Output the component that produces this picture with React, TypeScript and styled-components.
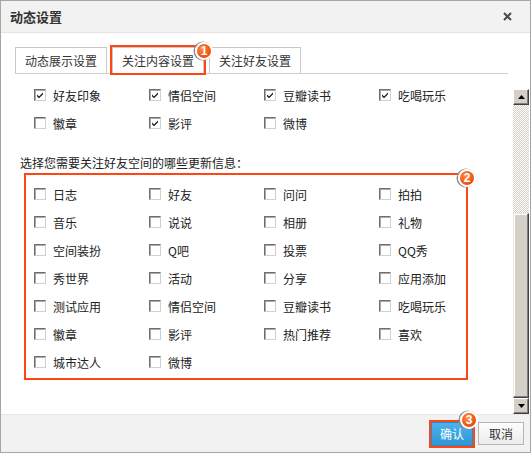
import styled, { createGlobalStyle } from "styled-components";

const GlobalStyle = createGlobalStyle`
  * { box-sizing: border-box; }
  body {
    margin: 0;
    background: #fff;
    font-family: "Noto Sans CJK SC", "Liberation Sans", sans-serif;
    font-size: 12px;
    color: #222;
  }
`;

const HILITE = "#ff4612";

const Dialog = styled.div`
  width: 531px;
  height: 453px;
  border: 1px solid #a6a6a6;
  display: flex;
  flex-direction: column;
  background: #fff;
`;

const TitleBar = styled.div`
  height: 32px;
  flex: none;
  background: #f2f2f2;
  border-bottom: 1px solid #e2e2e2;
  display: flex;
  align-items: center;
  justify-content: space-between;
  padding: 0 18px 0 9px;
`;

const Title = styled.span`
  font-size: 13px;
  font-weight: bold;
  color: #333;
`;

const CloseBtn = styled.span`
  display: flex;
  width: 9px;
  height: 9px;
  cursor: pointer;
`;

const TabBar = styled.div`
  display: flex;
  gap: 5px;
  margin: 14px 22px 0 14px;
  border-bottom: 1px solid #cfcfcf;
`;

const Tab = styled.div<{ $marked?: boolean }>`
  position: relative;
  width: 92px;
  height: 26px;
  border: 1px solid #c8c8c8;
  border-bottom: none;
  display: flex;
  align-items: center;
  justify-content: center;
  color: #333;
  background: #fff;
  ${(p) => p.$marked && `outline: 2px solid ${HILITE}; outline-offset: 0;`}
`;

const Badge = styled.span<{ $top: number; $right: number }>`
  position: absolute;
  top: ${(p) => p.$top}px;
  right: ${(p) => p.$right}px;
  width: 18px;
  height: 18px;
  border-radius: 50%;
  background: radial-gradient(circle at 40% 35%, #ff8a3d, #ee4d10 70%);
  border: 2px solid #fff;
  box-shadow: -1px 0 0 0.5px #8a8a8a;
  color: #fff;
  font: bold 12px "Liberation Sans", Arial, sans-serif;
  display: flex;
  align-items: center;
  justify-content: center;
  z-index: 2;
`;

const Middle = styled.div`
  flex: 1;
  display: flex;
  margin-top: 7px;
  min-height: 0;
`;

const ScrollView = styled.div`
  flex: 1;
  overflow: hidden;
`;

const Grid = styled.div`
  display: grid;
  grid-template-columns: repeat(4, 115px);
  grid-auto-rows: 28px;
`;

const TopGrid = styled(Grid)`
  padding-left: 33px;
`;

const Question = styled.div`
  margin: 16px 0 0 19px;
  height: 20px;
  line-height: 20px;
  color: #222;
`;

const FeedBox = styled.div`
  position: relative;
  width: 444px;
  margin-left: 23px;
  border: 2px solid ${HILITE};
  padding: 5px 0 2px 8px;
`;

const Item = styled.label`
  display: flex;
  align-items: center;
  gap: 7px;
  color: #222;
`;

const Box = styled.span`
  width: 12px;
  height: 12px;
  flex: none;
  background: #fff;
  border: 1px solid;
  border-color: #6f6f6f #d0d0d0 #d0d0d0 #6f6f6f;
  box-shadow: inset 1px 1px 0 #a9a9a9;
  display: flex;
  align-items: center;
  justify-content: center;
`;

const ScrollBar = styled.div`
  width: 16px;
  margin: 8px 1px 0 0;
  display: flex;
  flex-direction: column;
`;

const ScrollBtn = styled.div`
  height: 16px;
  flex: none;
  background: #d4d0c8;
  border: 1px solid;
  border-color: #fff #404040 #404040 #fff;
  box-shadow: inset -1px -1px 0 #808080;
  display: flex;
  align-items: center;
  justify-content: center;
`;

const Track = styled.div`
  flex: 1;
  display: flex;
  flex-direction: column;
  justify-content: flex-end;
  background: repeating-conic-gradient(#d4d0c8 0 25%, #fff 0 50%) 0 0 / 2px 2px;
`;

const Thumb = styled.div<{ $size: number }>`
  height: ${(p) => p.$size}px;
  background: #d4d0c8;
  border: 1px solid;
  border-color: #eae8e3 #404040 #404040 #eae8e3;
  box-shadow: inset -1px -1px 0 #808080, inset 1px 1px 0 #fff;
`;

const Footer = styled.div`
  height: 38px;
  flex: none;
  background: #f2f2f2;
  border-top: 1px solid #e8e8e8;
  display: flex;
  align-items: center;
  justify-content: flex-end;
  gap: 5px;
  padding-right: 6px;
`;

const Button = styled.button<{ $primary?: boolean }>`
  position: relative;
  height: ${(p) => (p.$primary ? 24 : 23)}px;
  width: ${(p) => (p.$primary ? 42 : 46)}px;
  padding: 0;
  font-family: "Noto Sans CJK SC", sans-serif;
  font-size: 12px;
  cursor: pointer;
  ${(p) =>
    p.$primary
      ? `
    color: #fff;
    background: linear-gradient(#4db2ea, #2f97d6);
    border: 1px solid #2a8ccb;
    outline: 2px solid ${HILITE};
  `
      : `
    color: #333;
    background: linear-gradient(#fdfdfd, #ececec);
    border: 1px solid #b5b5b5;
  `}
`;

const CheckMark = () => (
  <svg width="8" height="8" viewBox="0 0 8 8">
    <path d="M1 3.5 L3 5.5 L7 1.5 L7 3.2 L3 7.2 L1 5.2 Z" fill="#111" />
  </svg>
);

const Arrow = ({ down }: { down?: boolean }) => (
  <svg width="7" height="4" viewBox="0 0 7 4">
    <path d={down ? "M0 0 H7 L3.5 4 Z" : "M0 4 H7 L3.5 0 Z"} fill="#000" />
  </svg>
);

function Check({ label, checked }: { label: string; checked?: boolean }) {
  return (
    <Item>
      <Box>{checked && <CheckMark />}</Box>
      {label}
    </Item>
  );
}

const contentItems: [string, boolean][] = [
  ["好友印象", true],
  ["情侣空间", true],
  ["豆瓣读书", true],
  ["吃喝玩乐", true],
  ["徽章", false],
  ["影评", true],
  ["微博", false],
];

const feedItems = [
  "日志", "好友", "问问", "拍拍",
  "音乐", "说说", "相册", "礼物",
  "空间装扮", "Q吧", "投票", "QQ秀",
  "秀世界", "活动", "分享", "应用添加",
  "测试应用", "情侣空间", "豆瓣读书", "吃喝玩乐",
  "徽章", "影评", "热门推荐", "喜欢",
  "城市达人", "微博",
];

export default function App() {
  return (
    <>
      <GlobalStyle />
      <Dialog>
        <TitleBar>
          <Title>动态设置</Title>
          <CloseBtn>
            <svg width="9" height="9" viewBox="0 0 9 9">
              <path d="M1 1 L8 8 M8 1 L1 8" stroke="#4a4a4a" strokeWidth="2" />
            </svg>
          </CloseBtn>
        </TitleBar>

        <TabBar>
          <Tab>动态展示设置</Tab>
          <Tab $marked>
            关注内容设置
            <Badge $top={-6} $right={-10}>1</Badge>
          </Tab>
          <Tab>关注好友设置</Tab>
        </TabBar>

        <Middle>
          <ScrollView>
            <TopGrid>
              {contentItems.map(([label, on], i) => (
                <Check key={i} label={label} checked={on} />
              ))}
            </TopGrid>
            <Question>选择您需要关注好友空间的哪些更新信息：</Question>
            <FeedBox>
              <Badge $top={-6} $right={-10}>2</Badge>
              <Grid>
                {feedItems.map((label, i) => (
                  <Check key={i} label={label} />
                ))}
              </Grid>
            </FeedBox>
          </ScrollView>
          <ScrollBar>
            <ScrollBtn>
              <Arrow />
            </ScrollBtn>
            <Track>
              <Thumb $size={185} />
            </Track>
            <ScrollBtn>
              <Arrow down />
            </ScrollBtn>
          </ScrollBar>
        </Middle>

        <Footer>
          <Button $primary>
            确认
            <Badge $top={-12} $right={-6}>3</Badge>
          </Button>
          <Button>取消</Button>
        </Footer>
      </Dialog>
    </>
  );
}
